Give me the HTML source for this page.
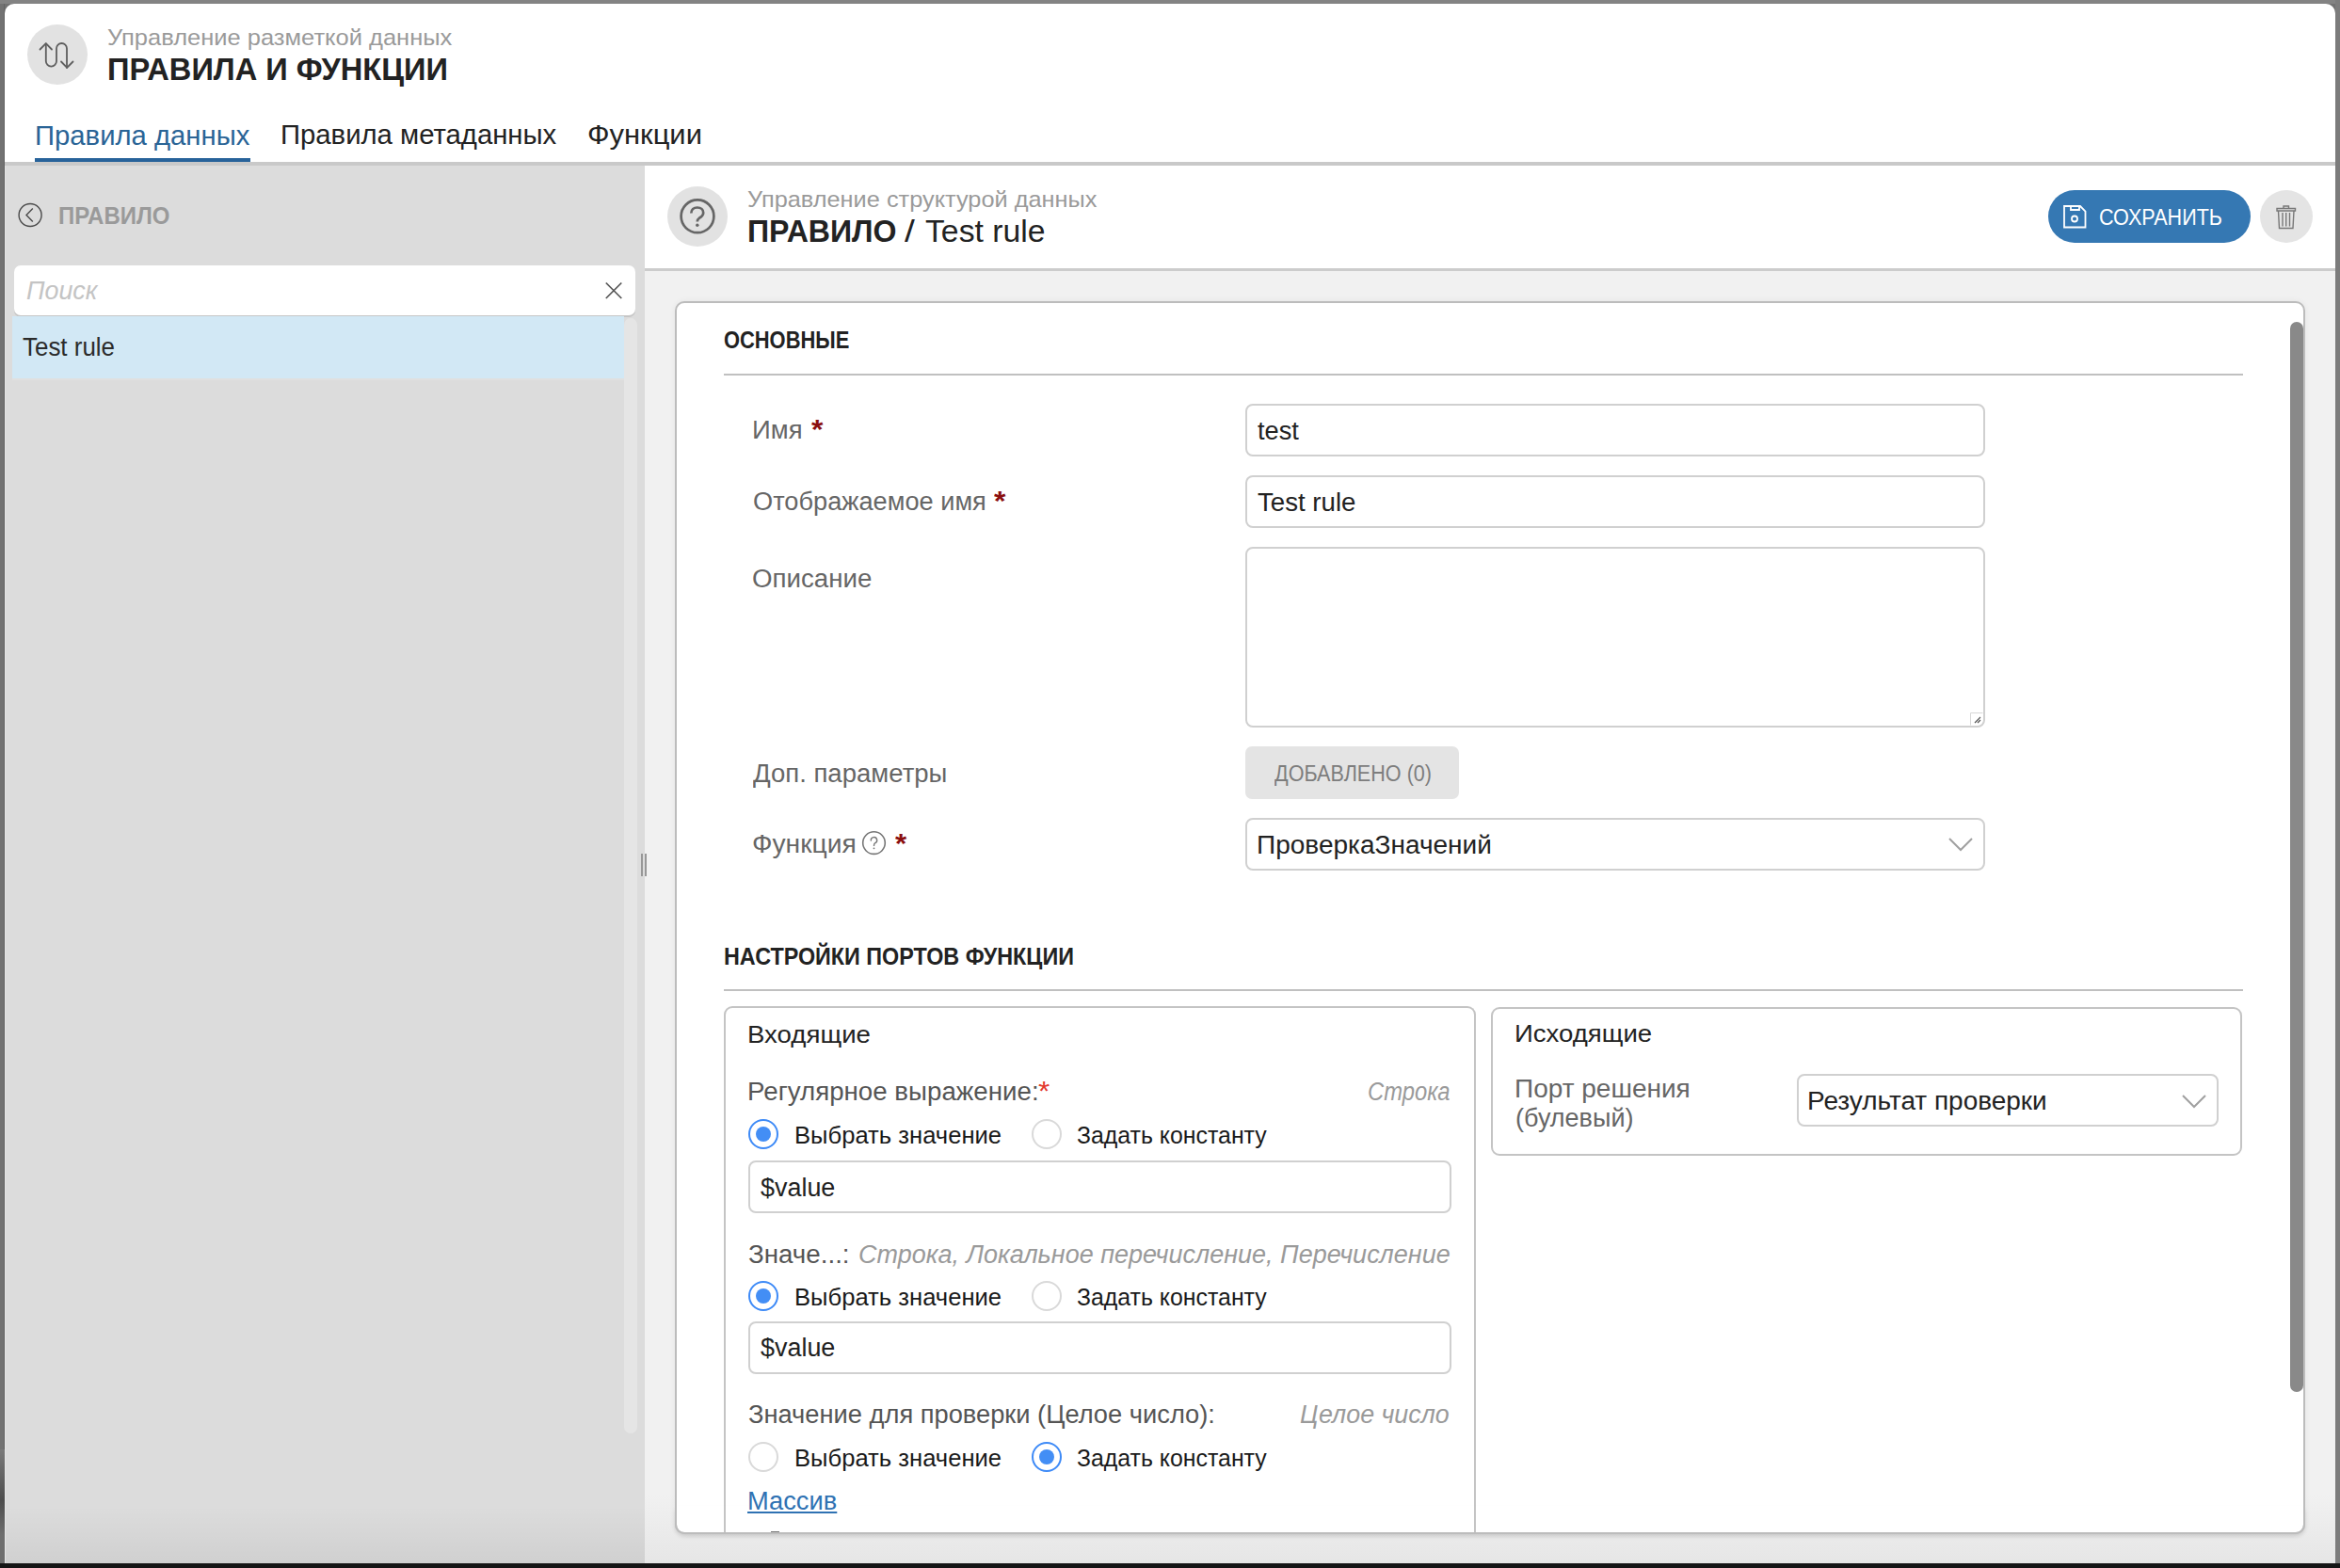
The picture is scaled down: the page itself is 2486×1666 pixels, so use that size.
<!DOCTYPE html>
<html><head><meta charset="utf-8"><style>
html,body{margin:0;padding:0;}
body{width:2486px;height:1666px;position:relative;overflow:hidden;background:#727272;font-family:"Liberation Sans",sans-serif;}
.a{position:absolute;box-sizing:border-box;}
.t{position:absolute;white-space:pre;line-height:normal;transform-origin:0 0;}
</style></head><body>
<!-- window frame -->
<div class="a" style="left:0;top:0;width:2486px;height:4px;background:#838383"></div>
<div class="a" style="left:2481px;top:0;width:5px;height:1661px;background:#7c7c7c"></div>
<div class="a" style="left:4px;top:4px;width:1px;height:1657px;background:#646464"></div>
<div class="a" style="left:0;top:1661px;width:2486px;height:5px;background:#151515"></div>
<div class="a" style="left:0;top:1540px;width:5px;height:121px;background:linear-gradient(#7a7a7a,#4e4e4e 45%,#6e6e6e 75%)"></div>
<div class="a" style="left:5px;top:4px;width:2476px;height:1657px;background:#fff;border-radius:10px 10px 0 0;overflow:hidden">
</div>
<!-- header circle icon -->
<div class="a" style="left:29px;top:26px;width:64px;height:64px;border-radius:50%;background:#e2e2e2"></div>
<svg class="a" style="left:29px;top:26px" width="64" height="64" viewBox="0 0 64 64">
  <g fill="none" stroke="#5e5e5e" stroke-width="1.8" stroke-linecap="round" stroke-linejoin="round">
    <path d="M13.5 26.5 L19.8 20.2 L26 26.5"/>
    <path d="M19.8 20.5 V39 A5.5 5.5 0 0 0 31 39 V25.5 A5.5 5.5 0 0 1 42 25.5 V46"/>
    <path d="M36 39.5 L42.2 45.8 L48.5 39.5"/>
  </g>
</svg>
<!-- tab underline and header separator -->
<div class="a" style="left:37px;top:168px;width:229px;height:4px;background:#27629a"></div>
<div class="a" style="left:5px;top:172px;width:2476px;height:4px;background:#c9c9c9"></div>
<!-- left panel -->
<div class="a" style="left:5px;top:176px;width:680px;height:1485px;background:#dcdcdc"></div>
<svg class="a" style="left:18px;top:214px" width="29" height="29" viewBox="0 0 29 29">
  <circle cx="14.1" cy="14.5" r="12" fill="none" stroke="#4a4a4a" stroke-width="1.4"/>
  <path d="M16.8 7.5 L10 14.5 L16.8 21.5" fill="none" stroke="#4a4a4a" stroke-width="1.4"/>
</svg>
<div class="a" style="left:15px;top:282px;width:660px;height:53px;background:#fff;border-radius:7px;box-shadow:0 2px 0 #c6c6c6"></div>
<svg class="a" style="left:640px;top:298px" width="24" height="22" viewBox="0 0 24 22">
  <path d="M3.8 2.5 L20.3 19 M20.3 2.5 L3.8 19" stroke="#555" stroke-width="1.7" fill="none"/>
</svg>
<div class="a" style="left:13px;top:336px;width:650px;height:66px;background:#d2e8f5"></div>
<div class="a" style="left:13px;top:402px;width:650px;height:2px;background:#e0e0e0"></div>
<div class="a" style="left:663px;top:338px;width:14px;height:1185px;background:#e5e5e5;border-radius:7px"></div>
<div class="a" style="left:5px;top:1600px;width:680px;height:61px;background:linear-gradient(rgba(0,0,0,0),rgba(0,0,0,0.055))"></div>
<div class="a" style="left:5px;top:176px;width:1px;height:1485px;background:#e4e4e4"></div>
<!-- main area -->
<div class="a" style="left:685px;top:176px;width:1796px;height:109px;background:#fff"></div>
<div class="a" style="left:685px;top:285px;width:1796px;height:3px;background:#cccccc"></div>
<div class="a" style="left:685px;top:288px;width:1796px;height:1373px;background:linear-gradient(#f1f1f1 0,#f1f1f1 1300px,#e6e6e6 1373px)"></div>
<!-- splitter handle -->
<div class="a" style="left:681px;top:907px;width:2px;height:24px;background:#989898"></div>
<div class="a" style="left:685px;top:907px;width:2px;height:24px;background:#989898"></div>
<!-- help circle -->
<div class="a" style="left:709px;top:198px;width:64px;height:64px;border-radius:50%;background:#e2e2e2"></div>
<svg class="a" style="left:709px;top:198px" width="64" height="64" viewBox="0 0 64 64">
  <circle cx="32" cy="31.8" r="17.4" fill="none" stroke="#666" stroke-width="2.7"/>
  <path d="M25.3 28.6 C25.3 24.6 28.2 22.5 31.8 22.5 C35.6 22.5 38.2 24.8 38.2 28 C38.2 31 36 32.6 33.8 33.8 C32.4 34.7 31.8 35.6 31.8 37.6" fill="none" stroke="#666" stroke-width="2.7"/>
  <circle cx="31.8" cy="41.3" r="1.7" fill="#666"/>
</svg>
<!-- save button -->
<div class="a" style="left:2176px;top:202px;width:215px;height:56px;border-radius:28px;background:#3578b3"></div>
<svg class="a" style="left:2190px;top:216px" width="28" height="28" viewBox="0 0 28 28">
  <path d="M3 3 H20 L25.5 8.5 V25.5 H3 Z" fill="none" stroke="#fff" stroke-width="1.8"/>
  <path d="M10 3 V7 H19 V3" fill="none" stroke="#fff" stroke-width="1.8"/>
  <circle cx="14" cy="16.5" r="3" fill="none" stroke="#fff" stroke-width="1.8"/>
</svg>
<!-- trash -->
<div class="a" style="left:2401px;top:202px;width:56px;height:56px;border-radius:50%;background:#e4e4e4"></div>
<svg class="a" style="left:2415px;top:214px" width="28" height="32" viewBox="0 0 28 32">
  <g fill="none" stroke="#777" stroke-width="1.4">
    <path d="M4 7.5 H23.5 V10 H4 Z"/>
    <path d="M11 7.5 V5 H16.5 V7.5"/>
    <path d="M5.5 10 L6.5 28.5 H21 L22 10"/>
    <path d="M10 12 V26.5 M13.7 12 V26.5 M17.5 12 V26.5"/>
  </g>
</svg>
<!-- card -->
<div class="a" style="left:717px;top:320px;width:1732px;height:1310px;background:#fff;border:2px solid #bcbcbc;border-radius:10px;box-shadow:0 0 6px rgba(0,0,0,0.06)"></div>
<div class="a" style="left:2433px;top:342px;width:14px;height:1137px;background:#898989;border-radius:7px"></div>
<div class="a" style="left:769px;top:397px;width:1614px;height:2px;background:#c0c0c0"></div>
<!-- inputs -->
<div class="a" style="left:1323px;top:429px;width:786px;height:56px;border:2px solid #d0d0d0;border-radius:8px"></div>
<div class="a" style="left:1323px;top:505px;width:786px;height:56px;border:2px solid #d0d0d0;border-radius:8px"></div>
<div class="a" style="left:1323px;top:581px;width:786px;height:192px;border:2px solid #d0d0d0;border-radius:8px"></div>
<svg class="a" style="left:2093px;top:757px" width="14" height="14" viewBox="0 0 14 14">
  <path d="M0.5 13.5 V0.5 H13.5" fill="none" stroke="#d8d8d8" stroke-width="1"/>
  <path d="M5 11 L11 5 M8 11 L11 8" stroke="#555" stroke-width="1.2"/>
</svg>
<div class="a" style="left:1323px;top:793px;width:227px;height:56px;background:#e4e4e4;border-radius:7px"></div>
<div class="a" style="left:1323px;top:869px;width:786px;height:56px;border:2px solid #d0d0d0;border-radius:8px"></div>
<svg class="a" style="left:2068px;top:887px" width="30" height="20" viewBox="0 0 30 20">
  <path d="M3 4 L15 16 L27 4" fill="none" stroke="#a0a0a0" stroke-width="2"/>
</svg>
<div class="a" style="left:769px;top:1051px;width:1614px;height:2px;background:#c0c0c0"></div>
<!-- port boxes -->
<div class="a" style="left:769px;top:1069px;width:799px;height:561px;border:2px solid #c4c4c4;border-bottom:none;border-radius:9px 9px 0 0"></div>
<div class="a" style="left:1584px;top:1070px;width:798px;height:158px;border:2px solid #c4c4c4;border-radius:9px"></div>
<div class="a" style="left:1909px;top:1141px;width:448px;height:56px;border:2px solid #d0d0d0;border-radius:8px"></div>
<svg class="a" style="left:2316px;top:1160px" width="30" height="20" viewBox="0 0 30 20">
  <path d="M3 4 L15 16 L27 4" fill="none" stroke="#a0a0a0" stroke-width="2"/>
</svg>
<div class="a" style="left:795px;top:1233px;width:747px;height:56px;border:2px solid #d0d0d0;border-radius:8px"></div>
<div class="a" style="left:795px;top:1404px;width:747px;height:56px;border:2px solid #d0d0d0;border-radius:8px"></div>
<!-- card bottom overlay -->
<div class="a" style="left:717px;top:1600px;width:1732px;height:30px;border:2px solid #bcbcbc;border-top:none;border-radius:0 0 10px 10px;box-shadow:0 3px 5px -1px rgba(0,0,0,0.13)"></div>



<div class="a" style="left:819px;top:1627px;width:9px;height:1px;background:#777"></div>
<!-- radios -->
<div class="a" style="left:795px;top:1189px;width:32px;height:32px;border:2px solid #3d8af7;border-radius:50%"></div>
<div class="a" style="left:803px;top:1197px;width:16px;height:16px;background:#438ef5;border-radius:50%"></div>
<div class="a" style="left:1096px;top:1189px;width:32px;height:32px;border:2px solid #d9d9d9;border-radius:50%"></div>
<div class="a" style="left:795px;top:1361px;width:32px;height:32px;border:2px solid #3d8af7;border-radius:50%"></div>
<div class="a" style="left:803px;top:1369px;width:16px;height:16px;background:#438ef5;border-radius:50%"></div>
<div class="a" style="left:1096px;top:1361px;width:32px;height:32px;border:2px solid #d9d9d9;border-radius:50%"></div>
<div class="a" style="left:795px;top:1532px;width:32px;height:32px;border:2px solid #d9d9d9;border-radius:50%"></div>
<div class="a" style="left:1096px;top:1532px;width:32px;height:32px;border:2px solid #3d8af7;border-radius:50%"></div>
<div class="a" style="left:1104px;top:1540px;width:16px;height:16px;background:#438ef5;border-radius:50%"></div>
<!-- function help icon -->
<svg class="a" style="left:914px;top:882px" width="29" height="28" viewBox="0 0 29 28">
  <circle cx="14.5" cy="13.6" r="11.8" fill="none" stroke="#777" stroke-width="1.6"/>
  <path d="M11.3 11 A3.2 3.2 0 1 1 15.5 13.8 C14.6 14.3 14.5 15 14.5 16.4" fill="none" stroke="#777" stroke-width="1.4" stroke-linecap="round"/>
  <circle cx="14.5" cy="19.3" r="0.9" fill="#777"/>
</svg>

<div class="t" style="left:114.00px;top:25.70px;font:normal 400 24.8px 'Liberation Sans';color:#9a9a9a;transform:scaleX(1.0280);">Управление разметкой данных</div>
<div class="t" style="left:114.22px;top:55.00px;font:normal 700 33px 'Liberation Sans';color:#222;transform:scaleX(0.9882);">ПРАВИЛА И ФУНКЦИИ</div>
<div class="t" style="left:37.18px;top:127.50px;font:normal 400 29px 'Liberation Sans';color:#2a6496;transform:scaleX(1.0092);">Правила данных</div>
<div class="t" style="left:298.08px;top:126.80px;font:normal 400 29px 'Liberation Sans';color:#222;transform:scaleX(1.0096);">Правила метаданных</div>
<div class="t" style="left:623.93px;top:126.80px;font:normal 400 29px 'Liberation Sans';color:#222;transform:scaleX(1.0673);">Функции</div>
<div class="t" style="left:61.96px;top:215.00px;font:normal 700 25.5px 'Liberation Sans';color:#9a9a9a;transform:scaleX(0.9400);">ПРАВИЛО</div>
<div class="t" style="left:27.90px;top:293.00px;font:italic 400 27.5px 'Liberation Sans';color:#c4c4c4;transform:scaleX(0.9774);">Поиск</div>
<div class="t" style="left:24.00px;top:353.90px;font:normal 400 27px 'Liberation Sans';color:#2b2b2b;transform:scaleX(0.9602);">Test rule</div>
<div class="t" style="left:794.00px;top:197.90px;font:normal 400 24.8px 'Liberation Sans';color:#9a9a9a;transform:scaleX(1.0218);">Управление структурой данных</div>
<div class="t" style="left:793.73px;top:227.80px;font:normal 700 32.5px 'Liberation Sans';color:#222;transform:scaleX(0.9874);">ПРАВИЛО</div>
<div class="t" style="left:961.00px;top:227.80px;font:normal 400 32.5px 'Liberation Sans';color:#222;transform:scaleX(1.2000);">/</div>
<div class="t" style="left:982.60px;top:227.70px;font:normal 400 32.5px 'Liberation Sans';color:#222;transform:scaleX(1.0382);">Test rule</div>
<div class="t" style="left:2230.06px;top:218.00px;font:normal 400 23px 'Liberation Sans';color:#fff;transform:scaleX(0.9373);">СОХРАНИТЬ</div>
<div class="t" style="left:768.86px;top:346.00px;font:normal 700 26px 'Liberation Sans';color:#222;transform:scaleX(0.8414);">ОСНОВНЫЕ</div>
<div class="t" style="left:799.36px;top:441.90px;font:normal 400 27px 'Liberation Sans';color:#666;transform:scaleX(1.0190);">Имя</div>
<div class="t" style="left:861.60px;top:438.90px;font:normal 700 30px 'Liberation Sans';color:#8b0f0f;transform:scaleX(1.0667);">*</div>
<div class="t" style="left:799.79px;top:517.90px;font:normal 400 27px 'Liberation Sans';color:#666;transform:scaleX(1.0073);">Отображаемое имя</div>
<div class="t" style="left:1056.20px;top:514.90px;font:normal 700 30px 'Liberation Sans';color:#8b0f0f;transform:scaleX(1.0667);">*</div>
<div class="t" style="left:799.47px;top:600.40px;font:normal 400 27px 'Liberation Sans';color:#666;transform:scaleX(1.0253);">Описание</div>
<div class="t" style="left:799.60px;top:806.70px;font:normal 400 27px 'Liberation Sans';color:#666;transform:scaleX(1.0196);">Доп. параметры</div>
<div class="t" style="left:799.45px;top:882.40px;font:normal 400 27px 'Liberation Sans';color:#666;transform:scaleX(1.0455);">Функция</div>
<div class="t" style="left:951.30px;top:879.40px;font:normal 700 30px 'Liberation Sans';color:#8b0f0f;transform:scaleX(1.0417);">*</div>
<div class="t" style="left:1335.60px;top:443.20px;font:normal 400 27px 'Liberation Sans';color:#222;transform:scaleX(1.0087);">test</div>
<div class="t" style="left:1335.60px;top:518.80px;font:normal 400 27px 'Liberation Sans';color:#222;transform:scaleX(1.0235);">Test rule</div>
<div class="t" style="left:1353.80px;top:808.00px;font:normal 400 24.6px 'Liberation Sans';color:#7d7d7d;transform:scaleX(0.8781);">ДОБАВЛЕНО (0)</div>
<div class="t" style="left:1335.22px;top:883.00px;font:normal 400 27px 'Liberation Sans';color:#222;transform:scaleX(1.0381);">ПроверкаЗначений</div>
<div class="t" style="left:769.10px;top:1000.80px;font:normal 700 26px 'Liberation Sans';color:#222;transform:scaleX(0.8976);">НАСТРОЙКИ ПОРТОВ ФУНКЦИИ</div>
<div class="t" style="left:794.08px;top:1083.50px;font:normal 400 26px 'Liberation Sans';color:#222;transform:scaleX(1.0620);">Входящие</div>
<div class="t" style="left:793.95px;top:1145.30px;font:normal 400 27px 'Liberation Sans';color:#555;transform:scaleX(1.0258);">Регулярное выражение:</div>
<div class="t" style="left:1103.00px;top:1142.30px;font:normal 400 30px 'Liberation Sans';color:#e33a2f;transform:scaleX(1.0500);">*</div>
<div class="t" style="left:1452.82px;top:1145.30px;font:italic 400 27px 'Liberation Sans';color:#9a9a9a;transform:scaleX(0.8805);">Строка</div>
<div class="t" style="left:843.55px;top:1192.00px;font:normal 400 25px 'Liberation Sans';color:#1a1a1a;transform:scaleX(1.0242);">Выбрать значение</div>
<div class="t" style="left:1143.50px;top:1192.00px;font:normal 400 25px 'Liberation Sans';color:#1a1a1a;transform:scaleX(0.9941);">Задать константу</div>
<div class="t" style="left:843.55px;top:1364.10px;font:normal 400 25px 'Liberation Sans';color:#1a1a1a;transform:scaleX(1.0242);">Выбрать значение</div>
<div class="t" style="left:1143.50px;top:1364.10px;font:normal 400 25px 'Liberation Sans';color:#1a1a1a;transform:scaleX(0.9941);">Задать константу</div>
<div class="t" style="left:843.55px;top:1535.00px;font:normal 400 25px 'Liberation Sans';color:#1a1a1a;transform:scaleX(1.0242);">Выбрать значение</div>
<div class="t" style="left:1143.50px;top:1535.00px;font:normal 400 25px 'Liberation Sans';color:#1a1a1a;transform:scaleX(0.9941);">Задать константу</div>
<div class="t" style="left:808.00px;top:1247.00px;font:normal 400 27px 'Liberation Sans';color:#222;transform:scaleX(0.9969);">$value</div>
<div class="t" style="left:795.00px;top:1317.50px;font:normal 400 27px 'Liberation Sans';color:#555;transform:scaleX(1.0268);">Значе...:</div>
<div class="t" style="left:911.70px;top:1317.50px;font:italic 400 27px 'Liberation Sans';color:#9a9a9a;transform:scaleX(0.9995);">Строка, Локальное перечисление, Перечисление</div>
<div class="t" style="left:808.00px;top:1417.40px;font:normal 400 27px 'Liberation Sans';color:#222;transform:scaleX(0.9969);">$value</div>
<div class="t" style="left:795.00px;top:1488.30px;font:normal 400 27px 'Liberation Sans';color:#555;transform:scaleX(1.0103);">Значение для проверки (Целое число):</div>
<div class="t" style="left:1381.30px;top:1488.30px;font:italic 400 27px 'Liberation Sans';color:#9a9a9a;transform:scaleX(0.9930);">Целое число</div>
<div class="t" style="left:793.88px;top:1580.20px;font:normal 400 27px 'Liberation Sans';color:#2f72b3;transform:scaleX(1.0110);text-decoration:underline;text-decoration-thickness:2px;text-underline-offset:2px;">Массив</div>
<div class="t" style="left:1608.88px;top:1083.40px;font:normal 400 26px 'Liberation Sans';color:#222;transform:scaleX(1.0594);">Исходящие</div>
<div class="t" style="left:1608.93px;top:1142.20px;font:normal 400 27px 'Liberation Sans';color:#666;transform:scaleX(1.0373);">Порт решения</div>
<div class="t" style="left:1610.00px;top:1173.00px;font:normal 400 27px 'Liberation Sans';color:#666;transform:scaleX(1.0010);">(булевый)</div>
<div class="t" style="left:1920.43px;top:1155.00px;font:normal 400 27px 'Liberation Sans';color:#222;transform:scaleX(1.0357);">Результат проверки</div>
</body></html>
